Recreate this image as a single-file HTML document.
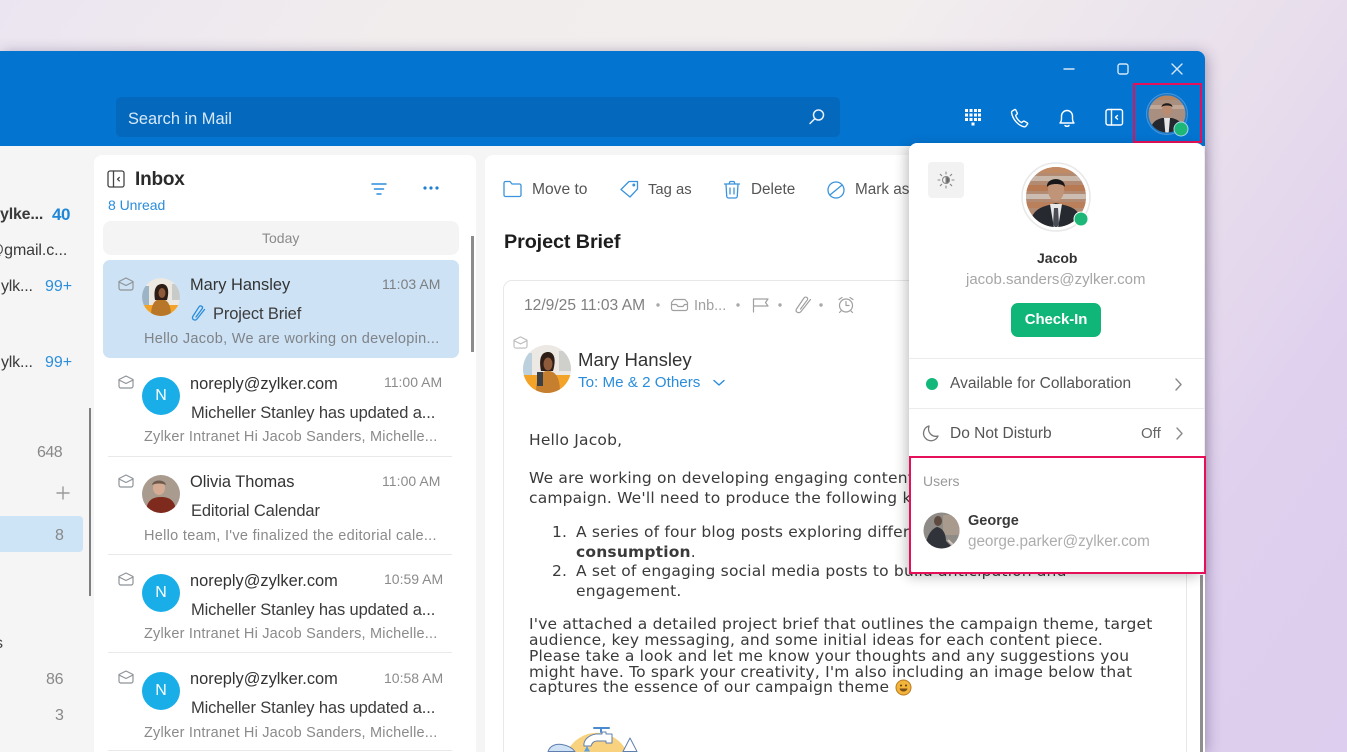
<!DOCTYPE html>
<html><head><meta charset="utf-8"><style>
html,body{margin:0;padding:0;width:1347px;height:752px;overflow:hidden}
#w{position:absolute;left:0;top:0;width:1347px;height:752px;overflow:hidden;filter:blur(.3px);background:linear-gradient(125deg,#ebe5f1 0%,#f1eded 22%,#f2eeee 48%,#e9e0ec 68%,#dfd0ee 85%,#ddcdee 100%);font-family:"Liberation Sans",sans-serif}
.a,.t{position:absolute}
.t{white-space:nowrap;line-height:20px}
svg{position:absolute;overflow:visible}
.ic{fill:none;stroke-linecap:round;stroke-linejoin:round}
.n{font-size:16.4px;color:#333}
.s{font-size:16.5px;color:#3c3c3c;letter-spacing:-.13px}
.p{font-size:14.5px;color:#8a8a8a;letter-spacing:.2px}
.h{font-size:14px;color:#8b8b8b}
.c{font-size:16px;color:#888}
.b{font-family:"DejaVu Sans",sans-serif;font-size:15.5px;color:#3a3a3a;line-height:16px;letter-spacing:.18px}
.av{position:absolute;width:38px;height:38px;border-radius:50%;background:#19aee8;color:#fff;text-align:center;line-height:38px;font-size:16px}
.hr{position:absolute;left:108px;width:344px;height:1px;background:#e9e9e9}
.tb{font-size:15.3px;color:#555}
</style></head><body><div id="w">

<!-- window -->
<div class="a" style="left:0;top:51px;width:1205px;height:701px;background:#f5f5f5;border-radius:0 8px 0 0;box-shadow:2px 2px 14px rgba(70,50,100,.42);overflow:hidden">
  <div class="a" style="left:0;top:0;width:1205px;height:95px;background:#0474d1"></div>
</div>

<!-- search -->
<div class="a" style="left:116px;top:97px;width:724px;height:40px;background:#0468bd;border-radius:5px"></div>
<div class="t" style="left:128px;top:109px;font-size:16.4px;color:#d8e9f8">Search in Mail</div>
<svg class="ic" style="left:808px;top:108px" width="18" height="18" viewBox="0 0 18 18" stroke="#e6f1fb" stroke-width="1.5"><circle cx="10.5" cy="7" r="5"/><path d="M6.8 10.7 2 15.500"/></svg>

<!-- window controls -->
<svg class="ic" style="left:1062px;top:62px" width="125" height="14" viewBox="0 0 125 14" stroke="#d4e6f7" stroke-width="1.4"><path d="M2 7h10"/><rect x="56" y="2" width="10" height="10" rx="2"/><path d="M110 2l10 10M120 2l-10 10"/></svg>

<!-- top icons -->
<svg style="left:964px;top:108px" width="18" height="20" viewBox="0 0 18 20" fill="#fff"><rect x="1" y="1" width="3" height="3"/><rect x="5.5" y="1" width="3" height="3"/><rect x="10" y="1" width="3" height="3"/><rect x="14" y="1" width="3" height="3"/><rect x="1" y="5.5" width="3" height="3"/><rect x="5.5" y="5.5" width="3" height="3"/><rect x="10" y="5.5" width="3" height="3"/><rect x="14" y="5.5" width="3" height="3"/><rect x="1" y="10" width="3" height="3"/><rect x="5.5" y="10" width="3" height="3"/><rect x="10" y="10" width="3" height="3"/><rect x="14" y="10" width="3" height="3"/><rect x="7.5" y="14.5" width="3" height="3"/></svg>
<svg class="ic" style="left:1010px;top:108px" width="20" height="20" viewBox="0 0 20 20" stroke="#fff" stroke-width="1.4"><path d="M2 3.2 4.6 1.6c.5-.3 1 0 1.2.4l1.4 3c.2.4.1.8-.2 1.1L5.6 7.400c.6 2.600 3.400 6.100 6 7.200l1.600-1.300c.4-.3.800-.3 1.200-.1l2.800 1.700c.5.300.6.800.3 1.200l-1.700 2.200c-.4.500-1 .6-1.600.5C8 17.600 2.700 11 1.600 5c-.1-.7 0-1.400.4-1.800z"/></svg>
<svg class="ic" style="left:1058px;top:108px" width="18" height="20" viewBox="0 0 18 20" stroke="#fff" stroke-width="1.4"><path d="M2 15c1.200-1.200 1.500-2.500 1.500-4.500V8a5.500 5.500 0 0 1 11 0v2.500c0 2 .3 3.300 1.500 4.500zM7 17.500c.5 1 3.500 1 4 0"/></svg>
<svg class="ic" style="left:1105px;top:108px" width="19" height="19" viewBox="0 0 19 19" stroke="#fff" stroke-width="1.4"><rect x="1" y="1.500" width="16.500" height="15.500" rx="2"/><path d="M6.500 1.500v15.500M12.500 7.500 10.500 9.300l2 1.800"/></svg>

<!-- top avatar -->
<svg style="left:1146px;top:93px" width="44" height="44" viewBox="0 0 44 44">
<defs><clipPath id="c1"><circle cx="21" cy="21" r="18.500"/></clipPath></defs>
<circle cx="21" cy="21" r="20.500" fill="#1a78c8" stroke="#4a95d8" stroke-width="1"/>
<g clip-path="url(#c1)"><rect width="44" height="44" fill="#a98f80"/><rect y="2" width="44" height="5" fill="#b9855f"/><rect y="12" width="44" height="4" fill="#c0a796"/><path d="M4 42c0-12 5-15 12-17h10c7 2 12 5 12 17z" fill="#24272d"/><path d="M18 25h6l-1.500 17h-3z" fill="#e6e6e6"/><ellipse cx="21" cy="16" rx="5" ry="6.500" fill="#b98c72"/><path d="M15.500 14c0-5 11-5 11 0-2-2-9-2-11 0z" fill="#1f1c1b"/></g>
<circle cx="35" cy="36" r="7" fill="#1db777" stroke="#a8d6ee" stroke-width="1"/>
</svg>
<div class="a" style="left:1133px;top:83px;width:65px;height:56px;border:2px solid #e6105a"></div>

<!-- sidebar -->
<div class="t" style="left:0;top:205px;font-size:16px;font-weight:bold;color:#3a3a3a;letter-spacing:-.2px;clip-path:inset(0)">ylke...</div>
<div class="t" style="left:52px;top:205px;font-size:17px;font-weight:bold;color:#1f87d8;letter-spacing:-.4px">40</div>
<div class="t" style="left:-12px;top:241px;font-size:16px;color:#3a3a3a;letter-spacing:-.1px">@gmail.c...</div>
<div class="t" style="left:1px;top:277px;font-size:16px;color:#3a3a3a;letter-spacing:-.2px">ylk...</div>
<div class="t" style="left:45px;top:277px;font-size:16px;color:#2b8fdc">99+</div>
<div class="t" style="left:1px;top:353px;font-size:16px;color:#3a3a3a;letter-spacing:-.2px">ylk...</div>
<div class="t" style="left:45px;top:353px;font-size:16px;color:#2b8fdc">99+</div>
<div class="t c" style="left:37px;top:443px;letter-spacing:-.5px">648</div>
<svg class="ic" style="left:56px;top:486px" width="15" height="15" stroke="#9a9a9a" stroke-width="1.400"><path d="M7 1v12M1 7h12"/></svg>
<div class="a" style="left:-8px;top:516px;width:91px;height:36px;border-radius:4px;background:#cde3f6"></div>
<div class="t c" style="left:55px;top:526px">8</div>
<div class="a" style="left:89px;top:408px;width:2px;height:188px;background:#7f7f7f"></div>
<div class="t" style="left:-5px;top:634px;font-size:16px;color:#444">s</div>
<div class="t c" style="left:46px;top:670px;letter-spacing:-.3px">86</div>
<div class="t c" style="left:55px;top:706px">3</div>

<!-- list panel -->
<div class="a" style="left:94px;top:155px;width:382px;height:597px;background:#fff;border-radius:8px 8px 0 0"></div>
<svg class="ic" style="left:107px;top:170px" width="18" height="18" viewBox="0 0 18 18" stroke="#444" stroke-width="1.300"><rect x="1" y="1" width="16" height="16" rx="2"/><path d="M6.500 1v16M12.300 7.500 10.500 9.200l1.800 1.700"/></svg>
<div class="t" style="left:135px;top:170px;font-size:19px;font-weight:bold;color:#2b2b2b;letter-spacing:-.2px">Inbox</div>
<div class="t" style="left:108px;top:195px;font-size:14px;color:#2a8ddb;letter-spacing:-.05px">8 Unread</div>
<svg class="ic" style="left:371px;top:182px" width="16" height="14" viewBox="0 0 16 14" stroke="#2a8ddb" stroke-width="1.500"><path d="M1 2h14M3.500 7h9M6 12h4"/></svg>
<svg style="left:423px;top:186px" width="16" height="4" fill="#1f7fd2"><circle cx="2" cy="2" r="1.600"/><circle cx="8" cy="2" r="1.600"/><circle cx="14" cy="2" r="1.600"/></svg>
<div class="a" style="left:103px;top:221px;width:356px;height:34px;background:#f4f4f4;border-radius:8px"></div>
<div class="t" style="left:262px;top:228px;font-size:14px;color:#8a8a8a">Today</div>
<div class="a" style="left:471px;top:236px;width:3px;height:116px;background:#8c8c8c"></div>

<!-- row 1 -->
<div class="a" style="left:103px;top:260px;width:356px;height:98px;background:#cde2f5;border-radius:7px"></div>
<svg class="ic" style="left:118px;top:277px" width="16" height="14" viewBox="0 0 16 14" stroke="#8f9498" stroke-width="1.200"><path d="M1 4.500 8 1l7 3.500V11a2 2 0 0 1-2 2H3a2 2 0 0 1-2-2z"/><path d="M1 5l7 3.500L15 5"/></svg>
<svg style="left:142px;top:278px" width="38" height="38" viewBox="0 0 38 38"><defs><clipPath id="c2"><circle cx="19" cy="19" r="19"/></clipPath></defs><g clip-path="url(#c2)"><rect width="38" height="38" fill="#ece8e2"/><rect y="27" width="38" height="11" fill="#f3a328"/><rect x="0" y="8" width="7" height="19" fill="#9bb4c6"/><rect x="30" y="6" width="8" height="16" fill="#c9cbc8"/><path d="M9 38c0-12 4-17 10-17s10 5 10 17z" fill="#b87628"/><path d="M13 22c-2-12 2-16 7-16s8 5 5 16z" fill="#2d1d16"/><ellipse cx="20" cy="15" rx="3.500" ry="5" fill="#8d5a3b"/></g></svg>
<div class="t n" style="left:190px;top:275px">Mary Hansley</div>
<div class="t h" style="left:382px;top:274px;color:#7c7f82;letter-spacing:.05px">11:03 AM</div>
<svg class="ic" style="left:190px;top:304px" width="16" height="18" viewBox="0 0 16 18" stroke="#2a8ddb" stroke-width="1.300"><path d="M14.500 5.500 7 15c-1.800 2.200-5.500.5-4.300-2.400L9 2.800c1.200-1.800 4.300-.5 3.300 1.700L6 13"/></svg>
<div class="t s" style="left:213px;top:304px">Project Brief</div>
<div class="t p" style="left:144px;top:329px;color:#7f8388;letter-spacing:.3px">Hello Jacob, We are working on developin...</div>

<!-- row 2 -->
<svg class="ic" style="left:118px;top:375px" width="16" height="14" viewBox="0 0 16 14" stroke="#8f9498" stroke-width="1.200"><path d="M1 4.500 8 1l7 3.500V11a2 2 0 0 1-2 2H3a2 2 0 0 1-2-2z"/><path d="M1 5l7 3.500L15 5"/></svg>
<div class="av" style="left:142px;top:377px">N</div>
<div class="t n" style="left:190px;top:374px">noreply@zylker.com</div>
<div class="t h" style="left:384px;top:372px">11:00 AM</div>
<div class="t s" style="left:191px;top:403px">Micheller Stanley has updated a...</div>
<div class="t p" style="left:144px;top:427px">Zylker Intranet Hi Jacob Sanders, Michelle...</div>
<div class="hr" style="top:456px"></div>

<!-- row 3 -->
<svg class="ic" style="left:118px;top:474px" width="16" height="14" viewBox="0 0 16 14" stroke="#8f9498" stroke-width="1.200"><path d="M1 4.500 8 1l7 3.500V11a2 2 0 0 1-2 2H3a2 2 0 0 1-2-2z"/><path d="M1 5l7 3.500L15 5"/></svg>
<svg style="left:142px;top:475px" width="38" height="38" viewBox="0 0 38 38"><defs><clipPath id="c3"><circle cx="19" cy="19" r="19"/></clipPath></defs><g clip-path="url(#c3)"><rect width="38" height="38" fill="#a99b8e"/><path d="M4 38c0-12 6-16 15-16s15 4 15 16z" fill="#7e2b1d"/><ellipse cx="17" cy="13" rx="6" ry="7" fill="#d5ab93"/><path d="M10 10c1-6 13-6 14 0-4-2-10-2-14 0z" fill="#6e5a4c"/></g></svg>
<div class="t n" style="left:190px;top:472px">Olivia Thomas</div>
<div class="t h" style="left:382px;top:471px;letter-spacing:.05px">11:00 AM</div>
<div class="t s" style="left:191px;top:501px">Editorial Calendar</div>
<div class="t p" style="left:144px;top:526px;letter-spacing:.3px">Hello team, I've finalized the editorial cale...</div>
<div class="hr" style="top:554px"></div>

<!-- row 4 -->
<svg class="ic" style="left:118px;top:572px" width="16" height="14" viewBox="0 0 16 14" stroke="#8f9498" stroke-width="1.200"><path d="M1 4.500 8 1l7 3.500V11a2 2 0 0 1-2 2H3a2 2 0 0 1-2-2z"/><path d="M1 5l7 3.500L15 5"/></svg>
<div class="av" style="left:142px;top:574px">N</div>
<div class="t n" style="left:190px;top:571px">noreply@zylker.com</div>
<div class="t h" style="left:384px;top:569px">10:59 AM</div>
<div class="t s" style="left:191px;top:600px">Micheller Stanley has updated a...</div>
<div class="t p" style="left:144px;top:624px">Zylker Intranet Hi Jacob Sanders, Michelle...</div>
<div class="hr" style="top:652px"></div>

<!-- row 5 -->
<svg class="ic" style="left:118px;top:670px" width="16" height="14" viewBox="0 0 16 14" stroke="#8f9498" stroke-width="1.200"><path d="M1 4.500 8 1l7 3.500V11a2 2 0 0 1-2 2H3a2 2 0 0 1-2-2z"/><path d="M1 5l7 3.500L15 5"/></svg>
<div class="av" style="left:142px;top:672px">N</div>
<div class="t n" style="left:190px;top:669px">noreply@zylker.com</div>
<div class="t h" style="left:384px;top:668px">10:58 AM</div>
<div class="t s" style="left:191px;top:698px">Micheller Stanley has updated a...</div>
<div class="t p" style="left:144px;top:723px">Zylker Intranet Hi Jacob Sanders, Michelle...</div>
<div class="hr" style="top:750px"></div>

<!-- reading panel -->
<div class="a" style="left:485px;top:155px;width:720px;height:597px;background:#fff;border-radius:8px 0 0 0"></div>
<svg class="ic" style="left:503px;top:180px" width="19" height="18" viewBox="0 0 19 18" stroke="#3a93dc" stroke-width="1.300"><path d="M1 3a1.500 1.500 0 0 1 1.500-1.500h4.500l2 2.500h7.500A1.500 1.500 0 0 1 18 5.500V15a1.500 1.500 0 0 1-1.500 1.500h-14A1.500 1.500 0 0 1 1 15z"/></svg>
<div class="t tb" style="left:532px;top:180px;font-size:15.600px">Move to</div>
<svg class="ic" style="left:620px;top:180px" width="19" height="18" viewBox="0 0 19 18" stroke="#3a93dc" stroke-width="1.300"><path d="M1 9.500 9 1.500h8.500V9L10 17z"/><circle cx="13.800" cy="5" r=".8"/></svg>
<div class="t tb" style="left:648px;top:180px;font-size:14.800px">Tag as</div>
<svg class="ic" style="left:723px;top:180px" width="18" height="19" viewBox="0 0 18 19" stroke="#3a93dc" stroke-width="1.300"><path d="M1.500 4h15M6 4l1-2.500h4L12 4M3 4l.7 12a2 2 0 0 0 2 2h6.600a2 2 0 0 0 2-2L15 4M7 8v6M11 8v6"/></svg>
<div class="t tb" style="left:751px;top:180px">Delete</div>
<svg class="ic" style="left:827px;top:181px" width="18" height="18" viewBox="0 0 18 18" stroke="#3a93dc" stroke-width="1.300"><circle cx="9" cy="9" r="8"/><path d="M3.500 13.500 14.500 4.500"/></svg>
<div class="t tb" style="left:855px;top:180px">Mark as</div>
<div class="t" style="left:504px;top:232px;font-size:19.800px;font-weight:bold;color:#1d1d1d;letter-spacing:-.1px">Project Brief</div>

<!-- mail card -->
<div class="a" style="left:503px;top:280px;width:684px;height:472px;border:1px solid #e8e8e8;border-bottom:0;border-radius:9px 9px 0 0;box-sizing:border-box"></div>
<div class="a" style="left:1200px;top:575px;width:3px;height:177px;background:#8e8e8e"></div>
<div class="t" style="left:524px;top:296px;font-size:15.600px;color:#808080">12/9/25 11:03 AM</div>
<svg class="ic" style="left:655px;top:296px" width="220" height="18" viewBox="0 0 220 18" stroke="#a0a0a0" stroke-width="1.200"><circle cx="3" cy="9" r="1.700" fill="#a8a8a8" stroke="none"/><path d="M16.500 6.500 19 3.500h11l2.500 3v6a2 2 0 0 1-2 2h-12a2 2 0 0 1-2-2zM16.500 8.500h5l1.500 2h5l1.500-2h3"/><circle cx="83" cy="9" r="1.700" fill="#a8a8a8" stroke="none"/><path d="M98.500 16V3H113l-2.500 3.500L113 10H98.500"/><circle cx="125" cy="9" r="1.700" fill="#a8a8a8" stroke="none"/><path d="M155.500 3.500 146 15.500c-2 2.400-6 .6-4.600-2.400L149 2c1.400-1.900 4.400-.5 3.400 1.800L145.500 13"/><circle cx="166" cy="9" r="1.700" fill="#a8a8a8" stroke="none"/><circle cx="191" cy="9.500" r="6.500"/><path d="M191 5.500v4h3M184 3.500l3-2M198 3.500l-3-2M186 15l-1.500 1.500M196 15l1.500 1.500"/></svg>
<div class="t" style="left:694px;top:296px;font-size:14.500px;color:#a0a0a0">Inb...</div>
<svg class="ic" style="left:513px;top:336px" width="15" height="13" viewBox="0 0 16 14" stroke="#bbb" stroke-width="1.200"><path d="M1 4.500 8 1l7 3.500V11a2 2 0 0 1-2 2H3a2 2 0 0 1-2-2z"/><path d="M1 5l7 3.500L15 5"/></svg>
<svg style="left:523px;top:345px" width="48" height="48" viewBox="0 0 48 48"><defs><clipPath id="c4"><circle cx="24" cy="24" r="24"/></clipPath></defs><g clip-path="url(#c4)"><rect width="48" height="48" fill="#ece8e3"/><rect y="30" width="48" height="18" fill="#f3a328"/><rect x="0" y="8" width="9" height="22" fill="#bcd0dd"/><rect x="36" y="6" width="12" height="20" fill="#cfd0cc"/><path d="M13 48c0-15 4-22 12-22s12 7 12 22z" fill="#c67f2f"/><path d="M14 27h6v14h-6z" fill="#3b3f46"/><path d="M18 26c-3-15 2-19 7-19s9 5 5 19z" fill="#2d1d16"/><ellipse cx="25" cy="19" rx="4.500" ry="6.500" fill="#8d5a3b"/></g></svg>
<div class="t" style="left:578px;top:350px;font-size:18.600px;color:#333">Mary Hansley</div>
<div class="t" style="left:578px;top:373px;font-size:15.200px;color:#2a8ddb">To: Me &amp; 2 Others</div>
<svg class="ic" style="left:713px;top:379px" width="12" height="8" stroke="#2a8ddb" stroke-width="1.400"><path d="M1 1.500 6 6l5-4.500"/></svg>

<!-- mail body -->
<div class="t b" style="left:529px;top:432px">Hello Jacob,</div>
<div class="t b" style="left:529px;top:470px">We are working on developing engaging content</div>
<div class="t b" style="left:529px;top:490px">campaign. We'll need to produce the following k</div>
<div class="t b" style="left:552px;top:524px">1.</div>
<div class="t b" style="left:576px;top:524px">A series of four blog posts exploring differ</div>
<div class="t b" style="left:576px;top:544px;font-weight:bold">consumption<span style="font-weight:normal">.</span></div>
<div class="t b" style="left:552px;top:563px">2.</div>
<div class="t b" style="left:576px;top:563px">A set of engaging social media posts to build anticipation and</div>
<div class="t b" style="left:576px;top:583px">engagement.</div>
<div class="t b" style="left:529px;top:616px">I've attached a detailed project brief that outlines the campaign theme, target</div>
<div class="t b" style="left:529px;top:632px">audience, key messaging, and some initial ideas for each content piece.</div>
<div class="t b" style="left:529px;top:648px">Please take a look and let me know your thoughts and any suggestions you</div>
<div class="t b" style="left:529px;top:664px">might have. To spark your creativity, I'm also including an image below that</div>
<div class="t b" style="left:529px;top:679px">captures the essence of our campaign theme</div>
<svg style="left:895px;top:679px" width="17" height="17"><circle cx="8.500" cy="8.500" r="7.500" fill="#f2b53a" stroke="#b97a1f"/><path d="M4.500 9.500c1 4 7 4 8 0z" fill="#7b4d1a"/><circle cx="6" cy="6.500" r="1" fill="#5a3a10"/><circle cx="11" cy="6.500" r="1" fill="#5a3a10"/></svg>

<!-- illustration -->
<svg class="ic" style="left:530px;top:715px;overflow:hidden" width="120" height="37" viewBox="0 0 120 37" stroke="#5f7fae" stroke-width="1"><path d="M37 37A33 33 0 0 1 97 37z" fill="#f8d27e" stroke="none"/><path d="M54 31c-1-6 5-11 12-12h6v-2h4v2h6v9h-6v-2h-9c-3 0-5 2-6 5z" fill="#fff"/><path d="M64 13h15M71 13v4" stroke="#4a8bd0" stroke-width="2"/><path d="M100 23 93 36.500h14z" fill="#fff"/><path d="M18 36.500c2-6 8-8 14-7 6 1 10 3 13 7z" fill="#cfe2f5"/><path d="M57 31l-3 5.500h6z" fill="#5aa0e0" stroke="none"/></svg>

<!-- profile popup -->
<div class="a" style="left:909px;top:143px;width:295px;height:431px;background:#fff;border-radius:8px;box-shadow:-3px 3px 12px rgba(0,0,0,.24)"></div>
<div class="a" style="left:928px;top:162px;width:36px;height:36px;border-radius:4px;background:#f2f2f2"></div>
<svg class="ic" style="left:937px;top:171px" width="18" height="18" viewBox="0 0 18 18" stroke="#8a8a8a" stroke-width="1.100"><circle cx="9" cy="9" r="3.500"/><path d="M9 5.500a3.500 3.500 0 0 1 0 7z" fill="#666"/><path d="M9 1v2M9 15v2M1 9h2M15 9h2M3.300 3.300l1.400 1.400M13.300 13.300l1.400 1.400M3.300 14.700l1.400-1.400M13.300 4.700l1.400-1.400"/></svg>
<svg style="left:1021px;top:162px" width="72" height="72" viewBox="0 0 72 72">
<defs><clipPath id="c5"><circle cx="35" cy="35" r="30"/></clipPath></defs>
<circle cx="35" cy="35" r="34" fill="#fff" stroke="#e8e8e8" stroke-width="1.500"/>
<g clip-path="url(#c5)"><rect width="72" height="72" fill="#b38a72"/><rect y="5" width="72" height="6" fill="#c18a62"/><rect y="14" width="72" height="5" fill="#c9b8aa"/><rect y="23" width="72" height="6" fill="#b87a53"/><rect y="32" width="72" height="5" fill="#cbbdb1"/><rect y="40" width="72" height="6" fill="#b9805b"/><path d="M8 72c0-20 7-26 20-29l7-2 8 2c13 3 19 9 19 29z" fill="#26292f"/><path d="M29 42h12l-4 24h-4z" fill="#e8e8e8"/><path d="M33 46h4l1 16-3 5-3-5z" fill="#4a4d55"/><ellipse cx="35" cy="28" rx="8" ry="11" fill="#c09479"/><path d="M26 25c-1-10 18-11 18 0-3-4-15-4-18 0z" fill="#17171a"/></g>
<circle cx="60" cy="57" r="7" fill="#1db777" stroke="#fff" stroke-width="1"/>
</svg>
<div class="t" style="left:1037px;top:248px;font-size:14px;font-weight:bold;color:#333">Jacob</div>
<div class="t" style="left:966px;top:270px;font-size:15px;color:#a6a6a6">jacob.sanders@zylker.com</div>
<div class="a" style="left:1011px;top:303px;width:90px;height:34px;border-radius:7px;background:#0fb678;color:#fff;text-align:center;font-size:15px;line-height:34px;font-weight:bold;letter-spacing:-.1px">Check-In</div>
<div class="a" style="left:909px;top:358px;width:295px;height:1px;background:#ececec"></div>
<div class="a" style="left:909px;top:408px;width:295px;height:1px;background:#ececec"></div>
<div class="a" style="left:926px;top:378px;width:12px;height:12px;border-radius:50%;background:#12b87a"></div>
<div class="t" style="left:950px;top:374px;font-size:15.500px;color:#555;letter-spacing:.02px">Available for Collaboration</div>
<svg class="ic" style="left:1174px;top:378px" width="10" height="13" stroke="#8a8a8a" stroke-width="1.400"><path d="M2 1l5 5.500L2 12"/></svg>
<svg class="ic" style="left:922px;top:424px" width="18" height="18" viewBox="0 0 18 18" stroke="#777" stroke-width="1.300"><path d="M7 2a7.500 7.500 0 1 0 9 10C10 13.500 5 8.500 7 2z"/></svg>
<div class="t" style="left:950px;top:424px;font-size:15.500px;color:#555">Do Not Disturb</div>
<div class="t" style="left:1141px;top:424px;font-size:15px;color:#666">Off</div>
<svg class="ic" style="left:1175px;top:427px" width="10" height="13" stroke="#8a8a8a" stroke-width="1.400"><path d="M2 1l5 5.500L2 12"/></svg>
<div class="a" style="left:909px;top:456px;width:297px;height:118px;border:2px solid #e6105a;box-sizing:border-box"></div>
<div class="t" style="left:923px;top:471px;font-size:14px;color:#999">Users</div>
<svg style="left:923px;top:512px" width="37" height="37" viewBox="0 0 37 37"><defs><clipPath id="c6"><circle cx="18.500" cy="18.500" r="18"/></clipPath></defs><g clip-path="url(#c6)"><rect width="37" height="37" fill="#8f8b87"/><rect x="20" y="3" width="17" height="20" fill="#a89a8c"/><path d="M2 37c1-12 6-20 12-22 6 1 9 7 9 14l8 8z" fill="#30343a"/><ellipse cx="15" cy="9" rx="4" ry="5" fill="#5f4a3f"/><path d="M25 28l7 7" stroke="#d0c8bd" stroke-width="2"/></g></svg>
<div class="t" style="left:968px;top:511px;font-size:14.500px;font-weight:bold;color:#3a3a3a">George</div>
<div class="t" style="left:968px;top:532px;font-size:15.300px;color:#adadad;letter-spacing:-.05px">george.parker@zylker.com</div>
</div></body></html>
